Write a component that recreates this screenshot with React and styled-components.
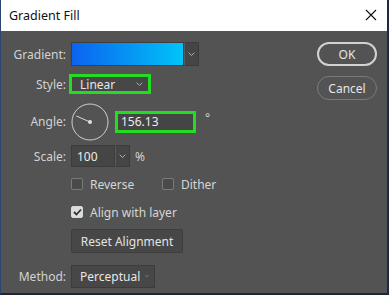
import React from 'react'
import styled, { createGlobalStyle } from 'styled-components'

const Global = createGlobalStyle`
  html, body { margin: 0; padding: 0; background: #535353; }
  body { font-family: "Noto Sans", "Open Sans", sans-serif; }
`

function Chevron({ size = 7, color = '#bdbdbd' }) {
  return (
    <svg width={size} height={size * 0.6} viewBox="0 0 10 6">
      <polyline points="1,1 5,5 9,1" fill="none" stroke={color} strokeWidth="1.3" />
    </svg>
  )
}

function AngleDial({ angle }) {
  const r = 18
  const rad = (angle * Math.PI) / 180
  const x2 = 19 + Math.cos(rad) * 15
  const y2 = 19 - Math.sin(rad) * 15
  return (
    <svg width="38" height="38" viewBox="0 0 38 38">
      <circle cx="19" cy="19" r={r} fill="none" stroke="#cfcfcf" strokeWidth="1" />
      <line x1="19" y1="19" x2={x2} y2={y2} stroke="#d8d8d8" strokeWidth="1" />
      <circle cx="19" cy="19" r="2" fill="#e0e0e0" />
    </svg>
  )
}

function Check({ checked }) {
  return (
    <Box checked={checked}>
      {checked && (
        <svg width="9" height="8" viewBox="0 0 9 8">
          <polyline points="1,4 3.5,6.5 8,1.5" fill="none" stroke="#333" strokeWidth="1.8" />
        </svg>
      )}
    </Box>
  )
}

export default function App() {
  return (
    <>
      <Global />
      <Window>
        <TitleBar>
          <Title>Gradient Fill</Title>
          <Close>
            <svg width="12" height="12" viewBox="0 0 12 12">
              <path d="M1 1 L11 11 M11 1 L1 11" stroke="#111" strokeWidth="1.1" />
            </svg>
          </Close>
        </TitleBar>
        <Body>
          <Form>
            <Row h={24} mt={0}>
              <Label>Gradient:</Label>
              <Swatch />
              <ArrowBox h={24}><Chevron /></ArrowBox>
            </Row>
            <Row h={20} mt={8}>
              <Label>Style:</Label>
              <Select w={82} highlight>
                <span>Linear</span>
                <Chevron />
              </Select>
            </Row>
            <Row h={37} mt={9}>
              <Label>Angle:</Label>
              <AngleDial angle={156.13} />
              <Input highlight>156.13</Input>
              <Unit ml={9} up>°</Unit>
            </Row>
            <Row h={22} mt={5}>
              <Label>Scale:</Label>
              <Input w={44} h={22}>100</Input>
              <ArrowBox h={22}><Chevron /></ArrowBox>
              <Unit ml={5}>%</Unit>
            </Row>
            <Row h={16} mt={9}>
              <Label />
              <CheckItem w={91}><Check /><span>Reverse</span></CheckItem>
              <CheckItem><Check /><span>Dither</span></CheckItem>
            </Row>
            <Row h={16} mt={12}>
              <Label />
              <CheckItem><Check checked /><span>Align with layer</span></CheckItem>
            </Row>
            <Row h={24} mt={9}>
              <Label />
              <FlatButton>Reset Alignment</FlatButton>
            </Row>
            <Row h={24} mt={11}>
              <Label>Method:</Label>
              <Select w={84} h={23}>
                <span>Perceptual</span>
                <Chevron />
              </Select>
            </Row>
          </Form>
          <Actions>
            <PillButton primary>OK</PillButton>
            <PillButton>Cancel</PillButton>
          </Actions>
        </Body>
      </Window>
    </>
  )
}

const Window = styled.div`
  width: 389px;
  height: 295px;
  box-sizing: border-box;
  border-left: 1px solid #2b4570;
  border-right: 2px solid #1e2a44;
  border-bottom: 2px solid #1e2538;
  background: #535353;
  display: flex;
  flex-direction: column;
  overflow: hidden;
`

const TitleBar = styled.div`
  height: 31px;
  flex-shrink: 0;
  background: #ffffff;
  display: flex;
  align-items: center;
  justify-content: space-between;
  padding: 0 10px 0 8px;
`

const Title = styled.div`
  font-size: 12.5px;
  color: #111;
  margin-top: -1px;
`

const Close = styled.div`
  display: flex;
  align-items: center;
  margin-top: -1px;
`

const Body = styled.div`
  flex: 1;
  display: flex;
  justify-content: space-between;
  padding: 11px 10px 0 0;
`

const Form = styled.div`
  display: flex;
  flex-direction: column;
`

const Row = styled.div`
  display: flex;
  align-items: center;
  height: ${p => p.h}px;
  margin-top: ${p => p.mt}px;
`

const Label = styled.div`
  width: 65px;
  padding-right: 5px;
  text-align: right;
  font-size: 12px;
  color: #d2d2d2;
  flex-shrink: 0;
`

const Swatch = styled.div`
  width: 113px;
  height: 24px;
  box-sizing: border-box;
  background: linear-gradient(to right, #0b63f0, #00c4f8);
  border: 1px solid #3e3e3e;
`

const ArrowBox = styled.div`
  width: 15px;
  height: ${p => p.h}px;
  box-sizing: border-box;
  background: #454545;
  border: 1px solid #3c3c3c;
  border-left: 1px solid #5a5a5a;
  display: flex;
  align-items: center;
  justify-content: center;
`

const Select = styled.div`
  width: ${p => p.w}px;
  height: ${p => p.h || 20}px;
  box-sizing: border-box;
  margin-left: ${p => (p.highlight ? -2 : 0)}px;
  border: ${p => (p.highlight ? '3px solid #22dd22' : '1px solid #3c3c3c')};
  background: #474747;
  display: flex;
  align-items: center;
  justify-content: space-between;
  gap: 5px;
  padding: 0 5px 0 ${p => (p.highlight ? 8 : 8)}px;
  font-size: 12px;
  color: #e6e6e6;
`

const Input = styled.div`
  width: ${p => p.w || 81}px;
  height: ${p => p.h || 22}px;
  box-sizing: border-box;
  margin-left: ${p => (p.highlight ? 6 : 0)}px;
  border: ${p => (p.highlight ? '3px solid #22dd22' : '1px solid #3c3c3c')};
  background: #454545;
  display: flex;
  align-items: center;
  padding-left: ${p => (p.highlight ? 3 : 5)}px;
  font-size: 12px;
  color: #ececec;
`

const Unit = styled.div`
  margin-left: ${p => p.ml}px;
  font-size: 12px;
  color: #d2d2d2;
  margin-top: ${p => (p.up ? -8 : 0)}px;
`

const CheckItem = styled.div`
  display: flex;
  align-items: center;
  gap: 7px;
  width: ${p => (p.w ? `${p.w}px` : 'auto')};
  font-size: 12px;
  color: #d6d6d6;
`

const Box = styled.div`
  width: 12px;
  height: 12px;
  box-sizing: border-box;
  border-radius: 2px;
  border: 1px solid ${p => (p.checked ? '#d8d8d8' : '#7a7a7a')};
  background: ${p => (p.checked ? '#dcdcdc' : '#4a4a4a')};
  display: flex;
  align-items: center;
  justify-content: center;
`

const FlatButton = styled.div`
  width: 112px;
  height: 24px;
  box-sizing: border-box;
  background: #474747;
  border: 1px solid #3e3e3e;
  border-radius: 2px;
  display: flex;
  align-items: center;
  justify-content: center;
  font-size: 12px;
  color: #e2e2e2;
`

const Actions = styled.div`
  display: flex;
  flex-direction: column;
  gap: 10px;
`

const PillButton = styled.div`
  width: 60px;
  height: 24px;
  box-sizing: border-box;
  border-radius: 12px;
  border: ${p => (p.primary ? '2px solid #d2d2d2' : '1.5px solid #7a7a7a')};
  display: flex;
  align-items: center;
  justify-content: center;
  font-size: 12px;
  color: #e6e6e6;
`
